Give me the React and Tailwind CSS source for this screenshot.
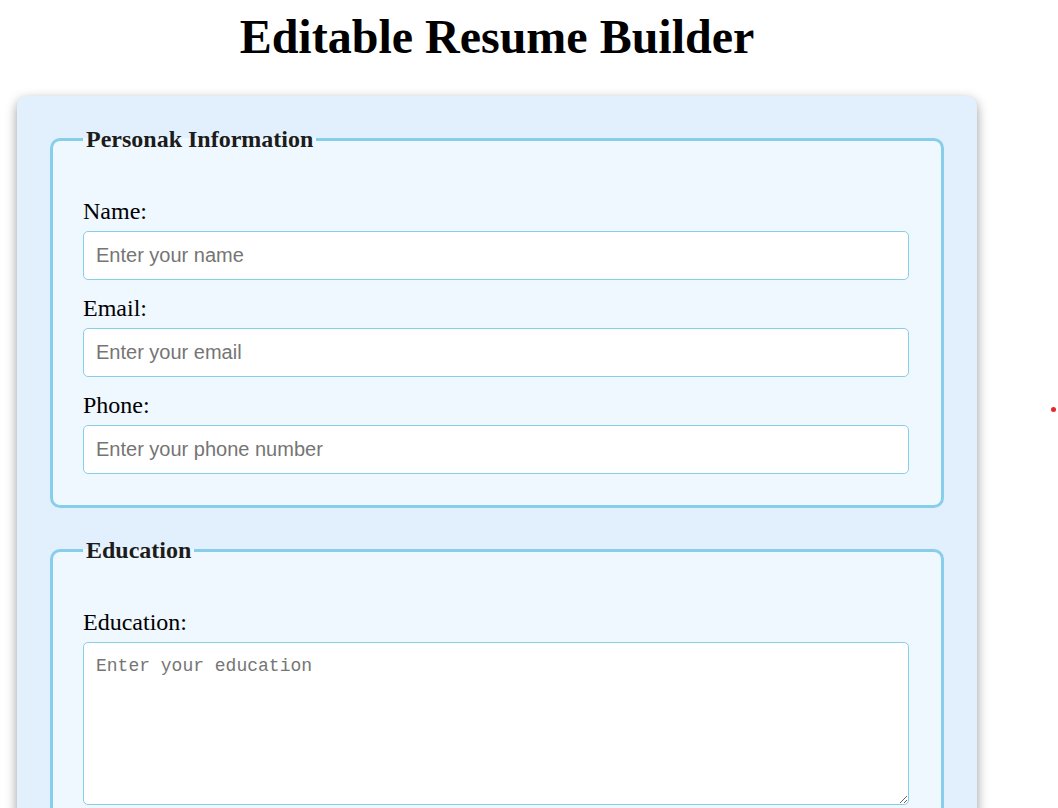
import React, { useState } from 'react';

const serif = { fontFamily: '"Liberation Serif", "Times New Roman", serif' };

const inputCls =
  "block w-[826px] h-[49px] px-3 border border-[#87ceeb] rounded-[5px] bg-white text-[20px] text-black placeholder:text-[#757575] outline-none font-['Liberation_Sans',Arial,sans-serif]";

const Field = ({ label, placeholder, value, onChange, first }) => (
  <div className={first ? '' : 'mt-[15px]'}>
    <label className="block text-[24px] leading-[27px] text-black" style={serif}>
      {label}
    </label>
    <input
      type="text"
      placeholder={placeholder}
      value={value}
      onChange={e => onChange(e.target.value)}
      className={`${inputCls} mt-[6px]`}
    />
  </div>
);

const Section = ({ title, children, className = '' }) => (
  <fieldset className={`border-[3px] border-[#87ceeb] rounded-[10px] bg-[#eff7ff] px-[30px] pt-[45px] pb-[31px] ${className}`}>
    <legend className="px-[3px] text-[24px] leading-[27px] font-bold text-[#1c1c1c]" style={serif}>
      {title}
    </legend>
    {children}
  </fieldset>
);

const App = () => {
  const [info, setInfo] = useState({ name: '', email: '', phone: '' });
  const [education, setEducation] = useState('');

  const set = key => val => setInfo(prev => ({ ...prev, [key]: val }));

  return (
    <div className="relative min-h-[808px] bg-white">
      <div className="w-[994px] pt-[9px]">
        <h1 className="text-center text-[48px] leading-[55px] font-bold text-black" style={serif}>
          Editable Resume Builder
        </h1>

        <div className="mt-[32px] ml-[17px] w-[960px] rounded-[10px] bg-[#e2f0fd] px-[33px] pt-[30px] pb-[30px] shadow-[0_4px_12px_rgba(0,0,0,0.4)]">
          <Section title="Personak Information">
            <Field first label="Name:" placeholder="Enter your name" value={info.name} onChange={set('name')} />
            <Field label="Email:" placeholder="Enter your email" value={info.email} onChange={set('email')} />
            <Field label="Phone:" placeholder="Enter your phone number" value={info.phone} onChange={set('phone')} />
          </Section>

          <Section title="Education" className="mt-[29px]">
            <label className="block text-[24px] leading-[27px] text-black" style={serif}>
              Education:
            </label>
            <textarea
              placeholder="Enter your education"
              value={education}
              onChange={e => setEducation(e.target.value)}
              className="block mt-[6px] w-[826px] h-[163px] px-3 py-[12px] border border-[#87ceeb] rounded-[5px] bg-white text-[18px] leading-[22px] text-black placeholder:text-[#757575] outline-none font-['Liberation_Mono','Courier_New',monospace]"
            />
          </Section>
        </div>
      </div>

      {/* stray red dot on the right edge */}
      <span className="absolute left-[1051px] top-[407px] w-[5px] h-[5px] rounded-full bg-[#e8262b]" />
    </div>
  );
};

export default App;
